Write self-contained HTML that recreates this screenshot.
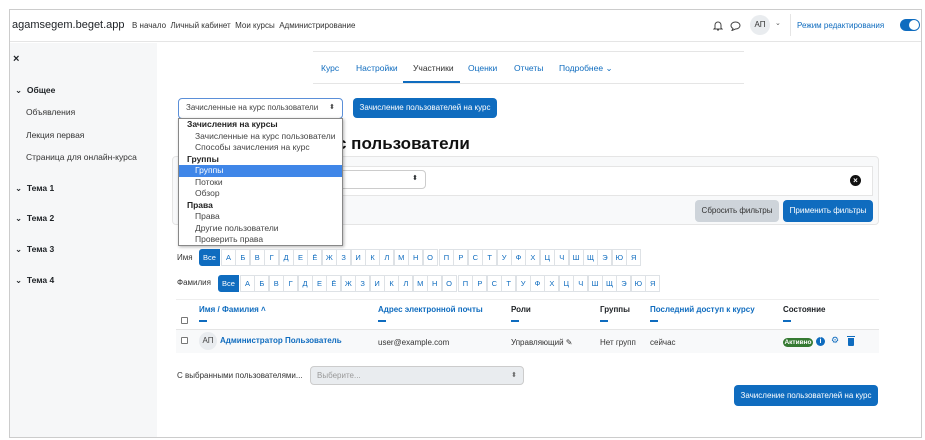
<!DOCTYPE html>
<html><head><meta charset="utf-8"><style>
*{box-sizing:border-box;margin:0;padding:0}
body{width:925px;height:440px;overflow:hidden;background:#fff;font-family:"Liberation Sans","DejaVu Sans",sans-serif;font-size:9px;color:#1d2125;position:relative}
.a{position:absolute}
.blue{color:#0f6cbf}
.frame{left:9px;top:9px;width:913px;height:429px;border:1px solid #ccc}
.nav{left:10px;top:10px;width:911px;height:32px;border-bottom:1px solid #e5e5e5;background:#fff}
.side{left:10px;top:43px;width:147px;height:394px;background:#f6f7f8}
.tab{top:63px;font-size:8.5px;color:#0f6cbf}
.btn{background:#0f6cbf;color:#fff;border-radius:4px;font-size:8px;text-align:center;white-space:nowrap}
.dd{left:178px;top:118px;width:165px;height:128px;border:1px solid #888;background:#fff;box-shadow:1px 1px 3px rgba(0,0,0,.3)}
.dd div{height:11.5px;line-height:11.5px;padding-left:8px;font-size:8.5px;color:#444}
.dd .h{font-weight:bold;color:#222}
.dd .i{padding-left:16px}
.dd .s{background:#3f86e8;color:#fff}
.let{position:absolute;height:17px;border:1px solid #dee2e6;color:#0f6cbf;font-size:7.5px;text-align:center;line-height:15px}
.th{top:305px;font-weight:bold;font-size:8px}
.dash{position:absolute;top:320px;width:8px;height:2px;background:#0f6cbf}
</style></head><body>
<div class="a frame"></div>
<div class="a nav">
 <div class="a" style="left:2px;top:9px;font-size:11px;color:#1d2125">agamsegem.beget.app</div>
 <div class="a" style="left:122px;top:11px;font-size:8px;color:#333">В начало &nbsp;Личный кабинет &nbsp;Мои курсы &nbsp;Администрирование</div>
 <svg class="a" style="left:703px;top:10px" width="10" height="11" viewBox="0 0 10 11"><path d="M2 8V5a3 3 0 016 0v3l1 1H1zM4 10h2" fill="none" stroke="#444" stroke-width="1"/></svg>
 <svg class="a" style="left:720px;top:11px" width="11" height="10" viewBox="0 0 11 10"><path d="M5.5 1C8 1 10 2.5 10 4.5S8 8 5.5 8L2 9.5l1-2C1.8 6.8 1 5.7 1 4.5 1 2.5 3 1 5.5 1z" fill="none" stroke="#444" stroke-width="1"/></svg>
 <div class="a" style="left:740px;top:5px;width:20px;height:20px;border-radius:50%;background:#e9ecef;font-size:8px;line-height:20px;text-align:center;color:#333">АП</div>
 <div class="a" style="left:765px;top:9px;font-size:7px;color:#555">⌄</div>
 <div class="a" style="left:780px;top:4px;width:1px;height:22px;background:#e5e5e5"></div>
 <div class="a" style="left:787px;top:11px;font-size:8px;color:#0f6cbf">Режим редактирования</div>
 <div class="a" style="left:890px;top:9px;width:20px;height:12px;border-radius:6px;background:#0f6cbf"><div class="a" style="right:1px;top:1px;width:10px;height:10px;border-radius:50%;background:#fff"></div></div>
</div>
<div class="a side">
 <div class="a" style="left:3px;top:10px;font-size:11px;font-weight:bold">×</div>
 <div class="a" style="left:5px;top:42px;font-size:8.5px;font-weight:bold">⌄ &nbsp;Общее</div>
 <div class="a" style="left:16px;top:64px;font-size:8.5px;color:#333">Объявления</div>
 <div class="a" style="left:16px;top:87px;font-size:8.5px;color:#333">Лекция первая</div>
 <div class="a" style="left:16px;top:109px;font-size:8.5px;color:#333">Страница для онлайн-курса</div>
 <div class="a" style="left:5px;top:140px;font-size:8.5px;font-weight:bold">⌄ &nbsp;Тема 1</div>
 <div class="a" style="left:5px;top:170px;font-size:8.5px;font-weight:bold">⌄ &nbsp;Тема 2</div>
 <div class="a" style="left:5px;top:201px;font-size:8.5px;font-weight:bold">⌄ &nbsp;Тема 3</div>
 <div class="a" style="left:5px;top:232px;font-size:8.5px;font-weight:bold">⌄ &nbsp;Тема 4</div>
</div>
<div class="a" style="left:313px;top:51px;width:431px;height:1px;background:#e5e5e5"></div>
<div class="a" style="left:313px;top:83px;width:431px;height:1px;background:#e5e5e5"></div>
<div class="a" style="left:403px;top:81px;width:57px;height:2px;background:#0f6cbf"></div>
<div class="a tab" style="left:321px">Курс</div>
<div class="a tab" style="left:356px">Настройки</div>
<div class="a tab" style="left:413px;color:#333">Участники</div>
<div class="a tab" style="left:468px">Оценки</div>
<div class="a tab" style="left:514px">Отчеты</div>
<div class="a tab" style="left:559px">Подробнее ⌄</div>
<div class="a" style="left:178px;top:98px;width:165px;height:21px;border:1.5px solid #5b8fd8;border-radius:4px;background:#fff;font-size:8px;color:#444;line-height:18px;padding-left:7px">Зачисленные на курс пользователи<span class="a" style="right:7px;top:0;font-size:7px">⬍</span></div>
<div class="a btn" style="left:353px;top:98px;width:144px;height:20px;line-height:20px">Зачисление пользователей на курс</div>
<div class="a" style="left:337px;top:134px;font-size:17px;font-weight:bold;color:#111">с пользователи</div>
<div class="a" style="left:172px;top:156px;width:707px;height:69px;border:1px solid #e5e5e5;border-radius:4px;background:#f8f9fa"></div>
<div class="a" style="left:178px;top:166px;width:695px;height:30px;border:1px solid #e5e5e5;background:#fff"></div>
<div class="a" style="left:300px;top:170px;width:126px;height:19px;border:1px solid #ccc;border-radius:4px;background:#fff"><span class="a" style="right:7px;top:3px;font-size:7px">⬍</span></div>
<div class="a" style="left:850px;top:175px;width:11px;height:11px;border-radius:50%;background:#111;color:#fff;font-size:8px;line-height:11px;text-align:center;font-weight:bold">×</div>
<div class="a" style="left:695px;top:200px;width:84px;height:22px;line-height:22px;border-radius:4px;background:#ced4da;text-align:center;font-size:8px;color:#333">Сбросить фильтры</div>
<div class="a btn" style="left:783px;top:200px;width:90px;height:22px;line-height:22px">Применить фильтры</div>
<div class="a dd">
<div class="h">Зачисления на курсы</div><div class="i">Зачисленные на курс пользователи</div><div class="i">Способы зачисления на курс</div><div class="h">Группы</div><div class="i s">Группы</div><div class="i">Потоки</div><div class="i">Обзор</div><div class="h">Права</div><div class="i">Права</div><div class="i">Другие пользователи</div><div class="i">Проверить права</div>
</div>
<div class="a" style="left:177px;top:253px;font-size:8px;color:#333">Имя</div>
<div class="a" style="left:177px;top:278px;font-size:8px;color:#333">Фамилия</div>
<div id="r1"></div>
<script>
var L="АБВГДЕЁЖЗИКЛМНОПРСТУФХЦЧШЩЭЮЯ".split("");
function row(x,y){var h='<div class="let" style="left:'+x+'px;top:'+y+'px;width:21px;background:#0f6cbf;color:#fff;border-color:#0f6cbf;border-radius:3px 0 0 3px">Все</div>';x+=22;
for(var i=0;i<L.length;i++){h+='<div class="let" style="left:'+x+'px;top:'+y+'px;width:15px">'+L[i]+'</div>';x+=14.4;if(i==14)x+=2;}return h;}
document.getElementById("r1").innerHTML=row(199,249)+row(218,275);
</script>
<div class="a" style="left:176px;top:299px;width:703px;height:1px;background:#eee"></div>
<div class="a" style="left:181px;top:317px;width:7px;height:7px;border:1px solid #777;border-radius:1px"></div>
<div class="a th blue" style="left:199px">Имя / Фамилия ˄</div>
<div class="a th blue" style="left:378px">Адрес электронной почты</div>
<div class="a th" style="left:511px">Роли</div>
<div class="a th" style="left:600px">Группы</div>
<div class="a th blue" style="left:650px">Последний доступ к курсу</div>
<div class="a th" style="left:783px">Состояние</div>
<div class="dash" style="left:199px"></div><div class="dash" style="left:378px"></div><div class="dash" style="left:511px"></div><div class="dash" style="left:600px"></div><div class="dash" style="left:650px"></div><div class="dash" style="left:783px"></div>
<div class="a" style="left:176px;top:329px;width:703px;height:24px;background:#f8f9fa;border-top:1px solid #e5e5e5"></div>
<div class="a" style="left:181px;top:337px;width:7px;height:7px;border:1px solid #777;border-radius:1px;background:#fff"></div>
<div class="a" style="left:199px;top:332px;width:18px;height:18px;border-radius:50%;background:#e9ecef;font-size:8px;line-height:18px;text-align:center;color:#444">АП</div>
<div class="a blue" style="left:220px;top:336px;font-size:8px;font-weight:bold">Администратор Пользователь</div>
<div class="a" style="left:378px;top:338px;font-size:8px;color:#333">user@example.com</div>
<div class="a" style="left:511px;top:338px;font-size:8px;color:#333">Управляющий ✎</div>
<div class="a" style="left:600px;top:338px;font-size:8px;color:#333">Нет групп</div>
<div class="a" style="left:650px;top:338px;font-size:8px;color:#333">сейчас</div>
<div class="a" style="left:783px;top:338px;width:30px;height:9px;border-radius:5px;background:#357a32;color:#fff;font-size:6.5px;font-weight:bold;line-height:9px;text-align:center">Активно</div>
<div class="a" style="left:816px;top:337px;width:9px;height:9px;border-radius:50%;background:#0f6cbf;color:#fff;font-size:7px;line-height:9px;text-align:center;font-weight:bold">i</div>
<div class="a blue" style="left:831px;top:335px;font-size:9px">⚙</div>
<div class="a" style="left:848px;top:338px;width:6px;height:8px;background:#0f6cbf;border-radius:0 0 1px 1px"></div>
<div class="a" style="left:847px;top:336px;width:8px;height:1px;background:#0f6cbf"></div>
<div class="a" style="left:177px;top:371px;font-size:8px;color:#333">С выбранными пользователями...</div>
<div class="a" style="left:310px;top:366px;width:214px;height:19px;border:1px solid #ccc;border-radius:4px;background:#e9ecef;font-size:8px;color:#999;line-height:17px;padding-left:6px">Выберите...<span class="a" style="right:6px;top:0;font-size:7px;color:#666">⬍</span></div>
<div class="a btn" style="left:734px;top:385px;width:144px;height:21px;line-height:21px">Зачисление пользователей на курс</div>
</body></html>
